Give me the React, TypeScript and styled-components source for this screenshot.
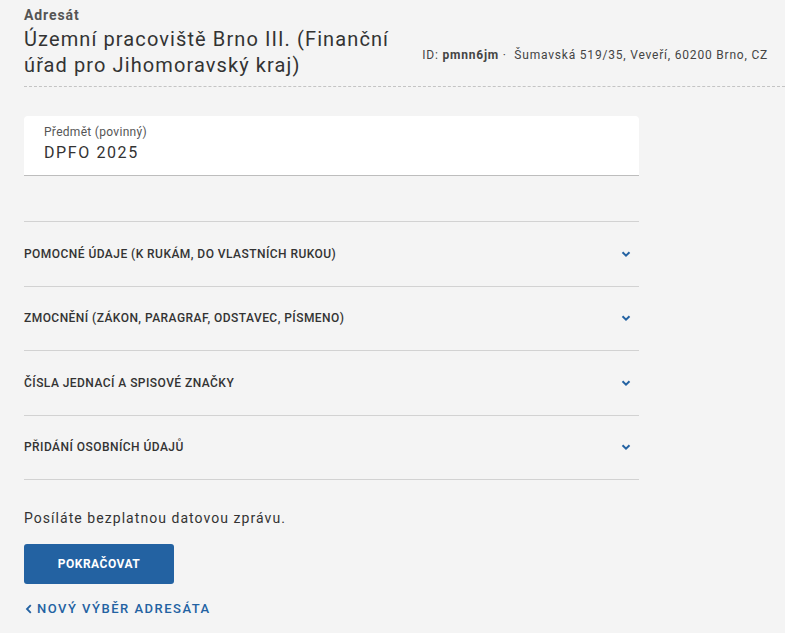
import React from "react";
import styled, { createGlobalStyle } from "styled-components";

const GlobalStyle = createGlobalStyle`
  html, body {
    margin: 0;
    background: #f4f4f4;
    font-family: Roboto, "Liberation Sans", sans-serif;
    color: #333;
  }
`;

const Page = styled.div`
  padding: 6px 0 0 24px;
  min-height: 633px;
  box-sizing: border-box;
`;

const Header = styled.div`
  display: flex;
  align-items: flex-end;
  justify-content: space-between;
  padding: 0 17px 8px 0;
  border-bottom: 1px dashed #c4c4c4;
`;

const Label = styled.div`
  font-size: 14px;
  font-weight: 700;
  color: #555;
  letter-spacing: 0.9px;
  line-height: 18px;
`;

const Title = styled.h1`
  margin: 2px 0 0;
  font-size: 20px;
  font-weight: 400;
  line-height: 26px;
  letter-spacing: 1.1px;
  color: #333;
  max-width: 390px;
`;

const Meta = styled.div`
  font-size: 12px;
  line-height: 16px;
  color: #444;
  letter-spacing: 0.8px;
  padding-bottom: 15px;
  b {
    font-weight: 700;
  }
`;

const Content = styled.div`
  width: 615px;
`;

const Field = styled.div`
  margin-top: 29px;
  background: #fff;
  border-radius: 4px 4px 0 0;
  border-bottom: 1px solid #bdbdbd;
  padding: 9px 20px 12px;
`;

const FieldLabel = styled.div`
  font-size: 12px;
  line-height: 14px;
  color: #555;
  letter-spacing: 0.3px;
`;

const FieldValue = styled.div`
  margin-top: 4px;
  font-size: 16px;
  line-height: 20px;
  letter-spacing: 1.6px;
  color: #333;
`;

const Accordion = styled.div`
  margin-top: 45px;
  border-top: 1px solid #d2d2d2;
`;

const Row = styled.div`
  display: flex;
  align-items: center;
  justify-content: space-between;
  height: 63.5px;
  border-bottom: 1px solid #d2d2d2;
  padding-right: 8px;
  font-size: 12px;
  font-weight: 500;
  color: #333;
  letter-spacing: 0.45px;
`;

const Note = styled.p`
  margin: 29px 0 0;
  font-size: 14px;
  line-height: 18px;
  letter-spacing: 1.05px;
  color: #333;
`;

const Button = styled.button`
  margin-top: 17px;
  width: 150px;
  height: 40px;
  border: none;
  border-radius: 3px;
  background: #2362a2;
  color: #fff;
  font-family: inherit;
  font-size: 12px;
  font-weight: 700;
  letter-spacing: 0.5px;
`;

const BackLink = styled.a`
  display: flex;
  align-items: center;
  gap: 3px;
  margin-top: 17px;
  font-size: 13px;
  font-weight: 500;
  letter-spacing: 1.5px;
  color: #2362a2;
  text-decoration: none;
`;

const Chevron = ({ dir = "down" }: { dir?: "down" | "left" }) =>
  dir === "down" ? (
    <svg width="10" height="10" viewBox="0 0 10 10">
      <path d="M1.5 3.2 L5 6.6 L8.5 3.2" fill="none" stroke="#2362a2" strokeWidth="2" />
    </svg>
  ) : (
    <svg width="10" height="12" viewBox="0 0 10 12">
      <path d="M6.8 2.2 L3 6 L6.8 9.8" fill="none" stroke="#2362a2" strokeWidth="1.8" />
    </svg>
  );

const sections = [
  "POMOCNÉ ÚDAJE (K RUKÁM, DO VLASTNÍCH RUKOU)",
  "ZMOCNĚNÍ (ZÁKON, PARAGRAF, ODSTAVEC, PÍSMENO)",
  "ČÍSLA JEDNACÍ A SPISOVÉ ZNAČKY",
  "PŘIDÁNÍ OSOBNÍCH ÚDAJŮ",
];

export default function App() {
  return (
    <>
      <GlobalStyle />
      <Page>
        <Header>
          <div>
            <Label>Adresát</Label>
            <Title>Územní pracoviště Brno III. (Finanční úřad pro Jihomoravský kraj)</Title>
          </div>
          <Meta>
            ID: <b>pmnn6jm</b> · &nbsp;Šumavská 519/35, Veveří, 60200 Brno, CZ
          </Meta>
        </Header>
        <Content>
          <Field>
            <FieldLabel>Předmět (povinný)</FieldLabel>
            <FieldValue>DPFO 2025</FieldValue>
          </Field>
          <Accordion>
            {sections.map((s) => (
              <Row key={s}>
                <span>{s}</span>
                <Chevron />
              </Row>
            ))}
          </Accordion>
          <Note>Posíláte bezplatnou datovou zprávu.</Note>
          <Button>POKRAČOVAT</Button>
          <BackLink href="#">
            <Chevron dir="left" />
            NOVÝ VÝBĚR ADRESÁTA
          </BackLink>
        </Content>
      </Page>
    </>
  );
}
